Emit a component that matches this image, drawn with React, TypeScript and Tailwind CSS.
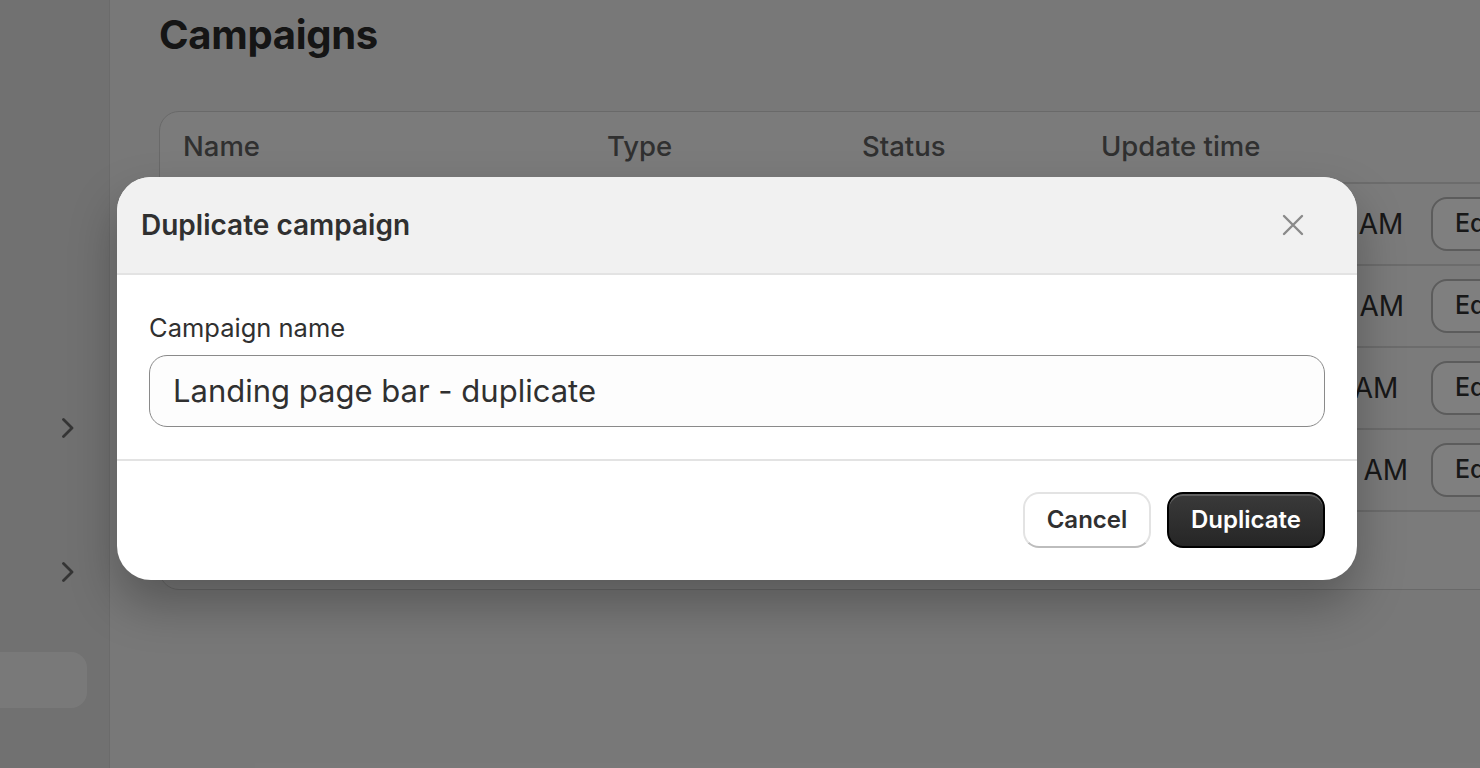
import { useState } from "react";

const rows = [
  { name: "Landing page bar", type: "Bar", status: "Active", time: "Jan 16, 2024, 10:21 AM" },
  { name: "Spring sale popup", type: "Popup", status: "Draft", time: "Jan 12, 2024, 10:21 AM" },
  { name: "Free shipping bar", type: "Bar", status: "Active", time: "Jan 11, 2024, 10:21 AM" },
  { name: "Newsletter signup", type: "Popup", status: "Paused", time: "May 8, 2024, 10:44 AM" },
];

const cols = "grid grid-cols-[424px_255px_239px_330px_1fr] items-center px-[23px]";

function Chevron() {
  return (
    <svg width="14" height="20" viewBox="0 0 14 20" fill="none">
      <path d="M3.5 1.5 12 10l-8.5 8.5" stroke="#6a6a6a" strokeWidth="2.8" strokeLinecap="round" strokeLinejoin="round" />
    </svg>
  );
}

export default function App() {
  const [name, setName] = useState("Landing page bar - duplicate");

  return (
    <div className="relative flex h-[768px] w-full overflow-hidden bg-[#f1f1f1] font-['Inter','Liberation_Sans',sans-serif] text-[#303030]">
      <aside className="flex w-[110px] shrink-0 flex-col border-r border-[#d6d6d6] bg-[#e2e2e2]">
        <div className="mt-[418px] flex h-[20px] items-center justify-end pr-[35px]">
          <Chevron />
        </div>
        <div className="mt-[124px] flex h-[20px] items-center justify-end pr-[35px]">
          <Chevron />
        </div>
        <div className="mt-[70px] h-[56px] w-[87px] rounded-r-[16px] bg-[#f3f3f3]" />
      </aside>

      <main className="flex-1 pl-[49px] pt-[12px]">
        <h1 className="text-[40px] font-bold leading-[46px] tracking-[-0.3px] text-[#2a2a2a]">Campaigns</h1>

        <div className="mt-[53px] w-[1400px] overflow-hidden rounded-[20px] border border-[#d2d2d2] bg-[#f6f6f6]">
          <div className={`${cols} h-[72px] border-b-2 border-[#d9d9d9] text-[27.5px] font-medium text-[#616161]`}>
            <span>Name</span>
            <span>Type</span>
            <span>Status</span>
            <span>Update time</span>
            <span />
          </div>
          {rows.map((r) => (
            <div key={r.name} className={`${cols} h-[82px] border-b-2 border-[#d9d9d9] text-[28px] text-[#303030]`}>
              <span>{r.name}</span>
              <span>{r.type}</span>
              <span>{r.status}</span>
              <span className="whitespace-nowrap">{r.time}</span>
              <span>
                <button className="h-[54px] rounded-[16px] border-2 border-[#b8b8b8] bg-white px-[22px] text-[25px] font-medium text-[#303030]">
                  Edit
                </button>
              </span>
            </div>
          ))}
          <div className="h-[77px]" />
        </div>
      </main>

      <div className="absolute inset-0 flex items-center justify-center bg-black/50 pb-[12px] pr-[6px]">
        <div className="w-[1240px] overflow-hidden rounded-[34px] bg-white shadow-[0_24px_48px_rgba(0,0,0,0.28)]">
          <div className="flex h-[98px] items-center justify-between border-b-2 border-[#e3e3e3] bg-[#f1f1f1] pl-[24px] pr-[52px]">
            <h2 className="text-[28px] font-semibold text-[#303030]">Duplicate campaign</h2>
            <button aria-label="Close" className="flex h-[24px] w-[24px] items-center justify-center">
              <svg width="22" height="22" viewBox="0 0 22 22" fill="none">
                <path d="M2 2l18 18M20 2 2 20" stroke="#8a8a8a" strokeWidth="2.4" strokeLinecap="round" />
              </svg>
            </button>
          </div>

          <div className="border-b-2 border-[#e3e3e3] px-[32px] pb-[32px] pt-[38px]">
            <label className="block text-[25.5px] leading-[30px] text-[#303030]">Campaign name</label>
            <input
              value={name}
              onChange={(e) => setName(e.target.value)}
              className="mt-[12px] h-[72px] w-full rounded-[18px] border-[1.5px] border-[#8a8a8a] bg-[#fdfdfd] px-[23px] text-[31px] text-[#303030] outline-none"
            />
          </div>

          <div className="flex h-[119px] items-center justify-end gap-[16px] pr-[32px]">
            <button className="h-[56px] w-[128px] rounded-[16px] border-2 border-[#e3e3e3] border-b-[#bdbdbd] bg-white text-[24px] font-semibold text-[#303030]">
              Cancel
            </button>
            <button className="h-[56px] w-[158px] rounded-[16px] border-2 border-black bg-gradient-to-b from-[#3a3a3a] to-[#262626] text-[24px] font-semibold text-white shadow-[inset_0_2px_0_rgba(255,255,255,0.2)]">
              Duplicate
            </button>
          </div>
        </div>
      </div>
    </div>
  );
}
